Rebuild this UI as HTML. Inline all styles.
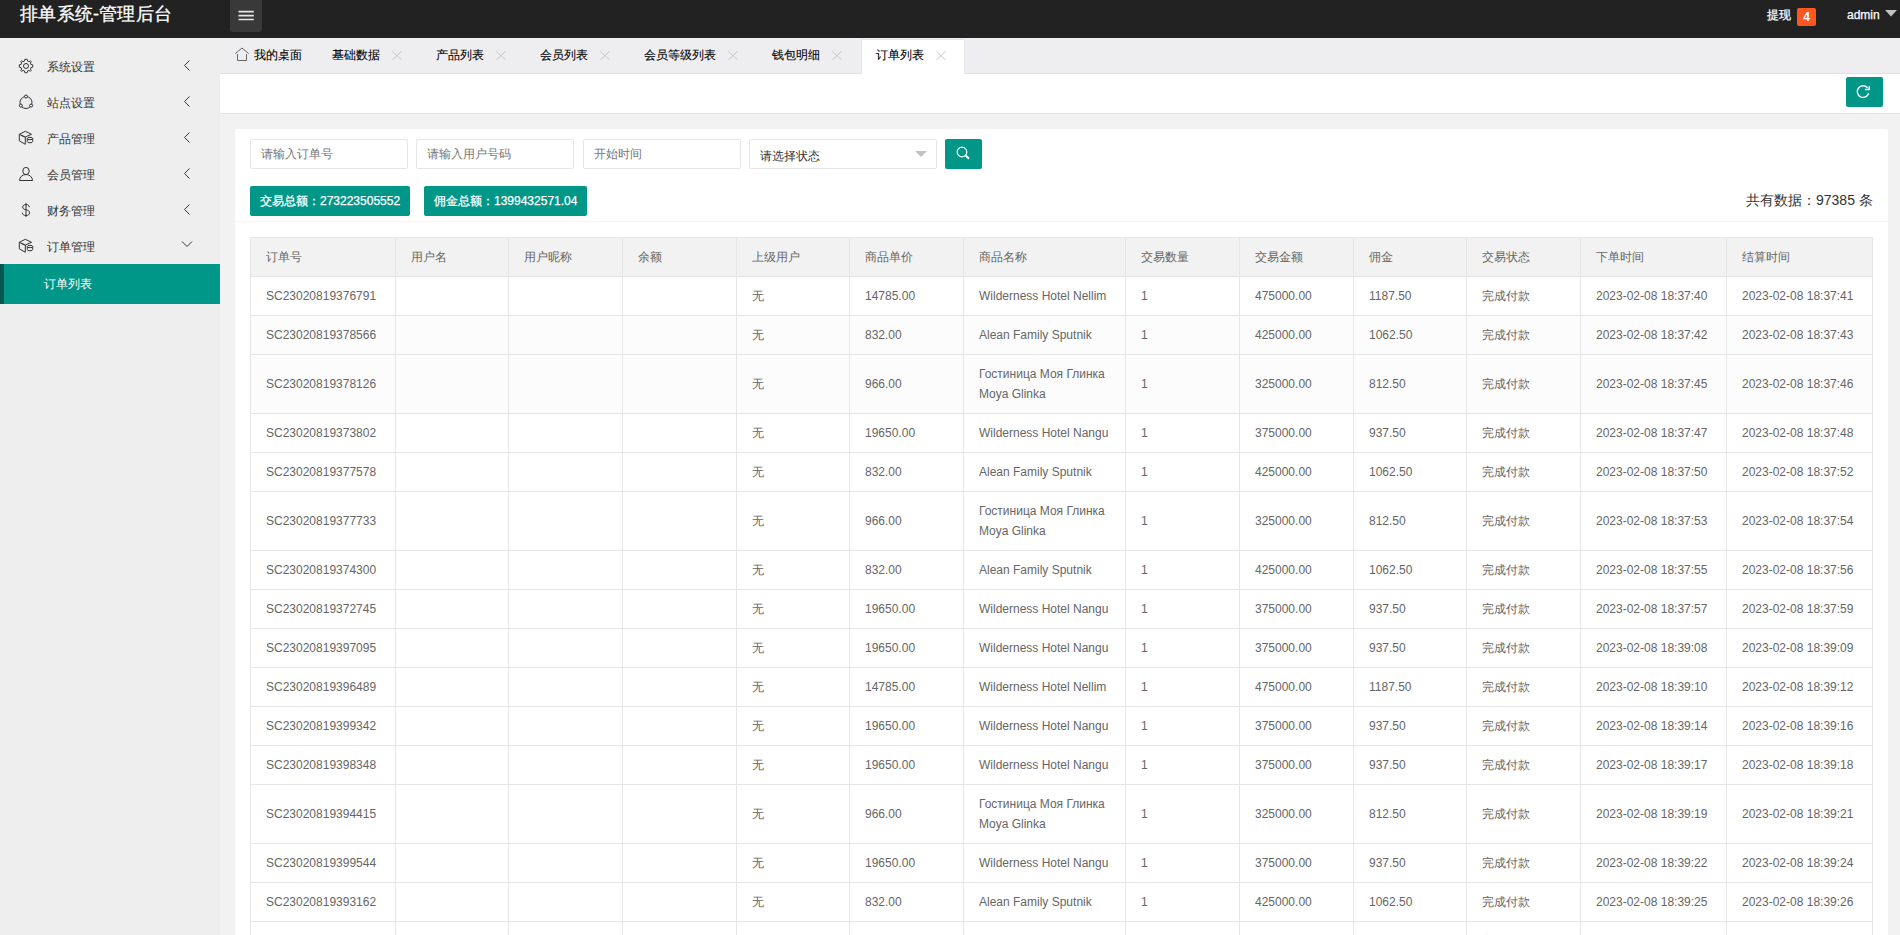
<!DOCTYPE html>
<html><head><meta charset="utf-8"><title>订单列表</title><style>
*{margin:0;padding:0;box-sizing:border-box}
html,body{width:1900px;height:935px;overflow:hidden;background:#f2f2f2;font-family:"Liberation Sans",sans-serif;font-size:12px;color:#333}
#hdr{position:absolute;left:0;top:0;width:1900px;height:38px;background:#222}
#logo{position:absolute;left:20px;top:2px;font-size:18px;line-height:24px;color:#fff;white-space:nowrap;letter-spacing:0.25px;-webkit-text-stroke:0.3px #fff}
#ham{position:absolute;left:230px;top:-4px;width:32px;height:36px;background:#393939;border-radius:3px}
#ham i{position:absolute;left:8px;width:16px;height:2px;background:#fff}
#hr1{position:absolute;left:1767px;top:5px;line-height:20px;font-size:12px;color:#fff;white-space:nowrap;-webkit-text-stroke:0.25px #fff}
#badge{position:absolute;left:1797px;top:8px;width:19px;height:18px;background:#ff5722;border-radius:2px;color:#fff;font-size:12px;line-height:18px;text-align:center;font-weight:bold}
#admin{position:absolute;left:1847px;top:5px;line-height:20px;font-size:12px;color:#fff;-webkit-text-stroke:0.25px #fff}
#side{position:absolute;left:0;top:38px;width:220px;height:897px;background:#eee}
.mi{position:absolute;left:0;width:220px;height:36px}
.mi .t{position:absolute;left:47px;top:1px;line-height:36px;font-size:12px;color:#333;white-space:nowrap}
.ic{position:absolute;left:18px;top:10px;width:16px;height:16px;overflow:visible}
.ar{position:absolute;left:178px;top:10px;width:16px;height:16px;overflow:visible}
#act{position:absolute;left:0;top:264px;width:220px;height:40px;background:#009688}
#act b{position:absolute;left:0;top:0;width:4px;height:40px;background:#05564f}
#act span{position:absolute;left:44px;top:0;line-height:40px;color:#fff;font-size:12px;white-space:nowrap}
#tabs{position:absolute;left:220px;top:38px;width:1680px;height:36px;background:#eeeef1;border-bottom:1px solid #e2e2e2}
#acttab{position:absolute;left:861px;top:39px;width:104px;height:36px;background:#fff;border:1px solid #e8e8e8;border-bottom:none}
.tab{position:absolute;top:39px;height:33px;line-height:33px;font-size:12px;color:#000;white-space:nowrap;-webkit-text-stroke:0.1px #000}
.x{position:absolute;top:51px;width:10px;height:10px;overflow:visible}
#bar{position:absolute;left:220px;top:74px;width:1680px;height:40px;background:#fff;border-bottom:1px solid #e2e2e2}
#refresh{position:absolute;left:1846px;top:77px;width:37px;height:30px;background:#009688;border-radius:2px}
#card{position:absolute;left:235px;top:129px;width:1653px;height:820px;background:#fff;border-radius:2px}
.inp{position:absolute;top:139px;height:30px;border:1px solid #e6e6e6;border-radius:2px;background:#fff;line-height:28px;padding-left:10px;color:#757575;font-size:12px;white-space:nowrap}
.btn{position:absolute;background:#009688;color:#fff;border-radius:2px;font-size:12px;white-space:nowrap;-webkit-text-stroke:0.25px #fff}
#divl{position:absolute;left:235px;top:221px;width:1653px;height:1px;background:#f6f6f6}
#total{position:absolute;left:1746px;top:190px;font-size:14px;line-height:20px;color:#333;white-space:nowrap}
table{position:absolute;left:250px;top:237px;border-collapse:collapse;table-layout:fixed}
td,th{border:1px solid #e6e6e6;padding:0 0 0 15px;font-size:12px;line-height:20px;color:#666;font-weight:normal;text-align:left;white-space:nowrap;overflow:hidden;vertical-align:middle}
th{background:#f2f2f2;height:39px}
td{height:39px}
tr.tall td{height:59px}
tr.g td{background:#fcfcfc}
</style></head><body>
<div id="hdr"><div id="logo">排单系统-管理后台</div><div id="ham"><svg style="position:absolute;left:0;top:4px" width="32" height="32" viewBox="0 0 32 32"><path d="M8.5 11.6 H23.8 M8.5 15.6 H23.8 M8.5 19.5 H23.8" stroke="#e6e6e6" stroke-width="1.6"/></svg></div><div id="hr1">提现</div><div id="badge">4</div><div id="admin">admin</div><svg style="position:absolute;left:1885px;top:10px" width="12" height="7" viewBox="0 0 12 7"><path d="M0 0 H12 L6 6.5 Z" fill="#c2c2c2"/></svg></div>
<div id="side">
<div class="mi" style="top:10px"><span class="t">系统设置</span><svg class="ic" style="" width="16" height="16" viewBox="0 0 16 16"><g fill="none" stroke="#333" stroke-width="1"><path d="M8 1.2 L9.2 1.4 L9.6 3.1 L10.9 3.7 L12.4 2.8 L13.3 3.6 L12.4 5.1 L12.9 6.4 L14.7 6.8 L14.8 8 L14.7 9.2 L12.9 9.6 L12.4 10.9 L13.3 12.4 L12.4 13.3 L10.9 12.4 L9.6 12.9 L9.2 14.7 L8 14.8 L6.8 14.7 L6.4 12.9 L5.1 12.4 L3.6 13.3 L2.8 12.4 L3.7 10.9 L3.1 9.6 L1.3 9.2 L1.2 8 L1.3 6.8 L3.1 6.4 L3.7 5.1 L2.8 3.6 L3.6 2.8 L5.1 3.7 L6.4 3.1 L6.8 1.4 Z"/><circle cx="8" cy="8" r="2.5"/></g></svg><svg class="ar" style="" width="16" height="16" viewBox="0 0 16 16"><path d="M11.5 2.5 L6.5 7.5 L11.5 12.5" fill="none" stroke="#333" stroke-width="1"/></svg></div>
<div class="mi" style="top:46px"><span class="t">站点设置</span><svg class="ic" style="" width="16" height="16" viewBox="0 0 16 16"><g fill="none" stroke="#333" stroke-width="1"><circle cx="8" cy="8.5" r="6"/><g fill="#eee"><circle cx="8" cy="2.5" r="1.5"/><circle cx="2.86" cy="11.6" r="1.5"/><circle cx="13.14" cy="11.6" r="1.5"/></g></g></svg><svg class="ar" style="" width="16" height="16" viewBox="0 0 16 16"><path d="M11.5 2.5 L6.5 7.5 L11.5 12.5" fill="none" stroke="#333" stroke-width="1"/></svg></div>
<div class="mi" style="top:82px"><span class="t">产品管理</span><svg class="ic" style="" width="16" height="16" viewBox="0 0 16 16"><g fill="none" stroke="#333" stroke-width="1"><path d="M1.3 4.3 L7.3 1.3 L13.5 4.3 L7.3 7 Z"/><path d="M1.3 4.3 V10.8 L7.3 14.3 V7"/><path d="M2.9 5.3 L6.6 6.9"/><ellipse cx="12" cy="8.5" rx="2.7" ry="1.2"/><path d="M9.3 8.5 V11.6 A2.7 1.2 0 0 0 14.7 11.6 V8.5"/></g></svg><svg class="ar" style="" width="16" height="16" viewBox="0 0 16 16"><path d="M11.5 2.5 L6.5 7.5 L11.5 12.5" fill="none" stroke="#333" stroke-width="1"/></svg></div>
<div class="mi" style="top:118px"><span class="t">会员管理</span><svg class="ic" style="" width="16" height="16" viewBox="0 0 16 16"><g fill="none" stroke="#333" stroke-width="1"><ellipse cx="8" cy="5" rx="3.2" ry="3.6"/><path d="M1.5 14.5 A6.5 6 0 0 1 14.5 14.5 Z"/></g></svg><svg class="ar" style="" width="16" height="16" viewBox="0 0 16 16"><path d="M11.5 2.5 L6.5 7.5 L11.5 12.5" fill="none" stroke="#333" stroke-width="1"/></svg></div>
<div class="mi" style="top:154px"><span class="t">财务管理</span><svg class="ic" style="" width="16" height="16" viewBox="0 0 16 16"><g fill="none" stroke="#333" stroke-width="1"><path d="M11.3 5.2 C11.3 3.5 10 2.6 8 2.6 C6 2.6 4.7 3.5 4.7 5 C4.7 6.6 6 7.3 8 7.8 C10.3 8.3 11.6 9.1 11.6 10.8 C11.6 12.5 10.2 13.5 8 13.5 C5.7 13.5 4.3 12.4 4.3 10.6"/><path d="M8 1 V15"/></g></svg><svg class="ar" style="" width="16" height="16" viewBox="0 0 16 16"><path d="M11.5 2.5 L6.5 7.5 L11.5 12.5" fill="none" stroke="#333" stroke-width="1"/></svg></div>
<div class="mi" style="top:190px"><span class="t">订单管理</span><svg class="ic" style="" width="16" height="16" viewBox="0 0 16 16"><g fill="none" stroke="#333" stroke-width="1"><path d="M1.3 4.3 L7.3 1.3 L13.5 4.3 L7.3 7 Z"/><path d="M1.3 4.3 V10.8 L7.3 14.3 V7"/><path d="M2.9 5.3 L6.6 6.9"/><ellipse cx="12" cy="8.5" rx="2.7" ry="1.2"/><path d="M9.3 8.5 V11.6 A2.7 1.2 0 0 0 14.7 11.6 V8.5"/></g></svg><svg class="ar" style="" width="16" height="16" viewBox="0 0 16 16"><path d="M4 3.5 L9 8.5 L14 3.5" fill="none" stroke="#333" stroke-width="1"/></svg></div>
</div>
<div id="act"><b></b><span>订单列表</span></div>
<div id="tabs"></div><div id="acttab"></div><div id="bar"></div>
<svg style="position:absolute;left:230px;top:42px" width="24" height="24" viewBox="0 0 24 24"><path d="M5.3 11.6 L12 6 L18.7 11.6" fill="none" stroke="#666" stroke-width="1"/><path d="M7.5 12 V18.5 H16.5 V12" fill="none" stroke="#666" stroke-width="1"/></svg>
<div class="tab" style="left:254px">我的桌面</div>
<div class="tab" style="left:332px">基础数据</div>
<svg class="x" style="left:392px" viewBox="0 0 10 10"><path d="M0.5 0.3 L9.5 8.9 M9.5 0.3 L0.5 8.9" stroke="#c6c6c6" stroke-width="1"/></svg>
<div class="tab" style="left:436px">产品列表</div>
<svg class="x" style="left:496px" viewBox="0 0 10 10"><path d="M0.5 0.3 L9.5 8.9 M9.5 0.3 L0.5 8.9" stroke="#c6c6c6" stroke-width="1"/></svg>
<div class="tab" style="left:540px">会员列表</div>
<svg class="x" style="left:600px" viewBox="0 0 10 10"><path d="M0.5 0.3 L9.5 8.9 M9.5 0.3 L0.5 8.9" stroke="#c6c6c6" stroke-width="1"/></svg>
<div class="tab" style="left:644px">会员等级列表</div>
<svg class="x" style="left:728px" viewBox="0 0 10 10"><path d="M0.5 0.3 L9.5 8.9 M9.5 0.3 L0.5 8.9" stroke="#c6c6c6" stroke-width="1"/></svg>
<div class="tab" style="left:772px">钱包明细</div>
<svg class="x" style="left:832px" viewBox="0 0 10 10"><path d="M0.5 0.3 L9.5 8.9 M9.5 0.3 L0.5 8.9" stroke="#c6c6c6" stroke-width="1"/></svg>
<div class="tab" style="left:876px">订单列表</div>
<svg class="x" style="left:936px" viewBox="0 0 10 10"><path d="M0.5 0.3 L9.5 8.9 M9.5 0.3 L0.5 8.9" stroke="#c6c6c6" stroke-width="1"/></svg>
<div id="refresh"><svg style="position:absolute;left:0;top:0" width="37" height="30" viewBox="0 0 37 30"><path d="M21.5 10.8 A5.8 5.8 0 1 0 22.7 16" fill="none" stroke="#fff" stroke-width="1.4"/><path d="M18.9 12.5 H23.2 V9.2" fill="none" stroke="#fff" stroke-width="1.4"/></svg></div>
<div id="card"></div>
<div class="inp" style="left:250px;width:158px">请输入订单号</div>
<div class="inp" style="left:416px;width:158px">请输入用户号码</div>
<div class="inp" style="left:583px;width:158px">开始时间</div>
<div class="inp" style="left:749px;width:188px;color:#333;padding-top:2px">请选择状态<svg style="position:absolute;left:165px;top:11px" width="12" height="7" viewBox="0 0 12 7"><path d="M0 0 H12 L6 6 Z" fill="#c2c2c2"/></svg></div>
<div class="btn" style="left:945px;top:139px;width:37px;height:30px"><svg style="position:absolute;left:11px;top:7px" width="15" height="15" viewBox="0 0 15 15"><circle cx="6" cy="6" r="4.8" fill="none" stroke="#fff" stroke-width="1.2"/><path d="M9.6 9.6 L13 12.8" stroke="#fff" stroke-width="2"/></svg></div>
<div class="btn" style="left:250px;top:186px;width:160px;height:30px;line-height:30px;padding-left:10px">交易总额：273223505552</div>
<div class="btn" style="left:424px;top:186px;width:163px;height:30px;line-height:30px;padding-left:10px">佣金总额：1399432571.04</div>
<div id="total">共有数据：97385 条</div>
<div id="divl"></div>
<table style="width:1623px"><colgroup><col style="width:145px"><col style="width:113px"><col style="width:114px"><col style="width:114px"><col style="width:113px"><col style="width:114px"><col style="width:162px"><col style="width:114px"><col style="width:114px"><col style="width:113px"><col style="width:114px"><col style="width:146px"><col style="width:146px"></colgroup>
<tr><th>订单号</th><th>用户名</th><th>用户昵称</th><th>余额</th><th>上级用户</th><th>商品单价</th><th>商品名称</th><th>交易数量</th><th>交易金额</th><th>佣金</th><th>交易状态</th><th>下单时间</th><th>结算时间</th></tr>
<tr><td>SC23020819376791</td><td></td><td></td><td></td><td>无</td><td>14785.00</td><td>Wilderness Hotel Nellim</td><td>1</td><td>475000.00</td><td>1187.50</td><td>完成付款</td><td>2023-02-08 18:37:40</td><td>2023-02-08 18:37:41</td></tr>
<tr class="g"><td>SC23020819378566</td><td></td><td></td><td></td><td>无</td><td>832.00</td><td>Alean Family Sputnik</td><td>1</td><td>425000.00</td><td>1062.50</td><td>完成付款</td><td>2023-02-08 18:37:42</td><td>2023-02-08 18:37:43</td></tr>
<tr class="tall g"><td>SC23020819378126</td><td></td><td></td><td></td><td>无</td><td>966.00</td><td>Гостиница Моя Глинка<br>Moya Glinka</td><td>1</td><td>325000.00</td><td>812.50</td><td>完成付款</td><td>2023-02-08 18:37:45</td><td>2023-02-08 18:37:46</td></tr>
<tr><td>SC23020819373802</td><td></td><td></td><td></td><td>无</td><td>19650.00</td><td>Wilderness Hotel Nangu</td><td>1</td><td>375000.00</td><td>937.50</td><td>完成付款</td><td>2023-02-08 18:37:47</td><td>2023-02-08 18:37:48</td></tr>
<tr><td>SC23020819377578</td><td></td><td></td><td></td><td>无</td><td>832.00</td><td>Alean Family Sputnik</td><td>1</td><td>425000.00</td><td>1062.50</td><td>完成付款</td><td>2023-02-08 18:37:50</td><td>2023-02-08 18:37:52</td></tr>
<tr class="tall"><td>SC23020819377733</td><td></td><td></td><td></td><td>无</td><td>966.00</td><td>Гостиница Моя Глинка<br>Moya Glinka</td><td>1</td><td>325000.00</td><td>812.50</td><td>完成付款</td><td>2023-02-08 18:37:53</td><td>2023-02-08 18:37:54</td></tr>
<tr><td>SC23020819374300</td><td></td><td></td><td></td><td>无</td><td>832.00</td><td>Alean Family Sputnik</td><td>1</td><td>425000.00</td><td>1062.50</td><td>完成付款</td><td>2023-02-08 18:37:55</td><td>2023-02-08 18:37:56</td></tr>
<tr><td>SC23020819372745</td><td></td><td></td><td></td><td>无</td><td>19650.00</td><td>Wilderness Hotel Nangu</td><td>1</td><td>375000.00</td><td>937.50</td><td>完成付款</td><td>2023-02-08 18:37:57</td><td>2023-02-08 18:37:59</td></tr>
<tr><td>SC23020819397095</td><td></td><td></td><td></td><td>无</td><td>19650.00</td><td>Wilderness Hotel Nangu</td><td>1</td><td>375000.00</td><td>937.50</td><td>完成付款</td><td>2023-02-08 18:39:08</td><td>2023-02-08 18:39:09</td></tr>
<tr><td>SC23020819396489</td><td></td><td></td><td></td><td>无</td><td>14785.00</td><td>Wilderness Hotel Nellim</td><td>1</td><td>475000.00</td><td>1187.50</td><td>完成付款</td><td>2023-02-08 18:39:10</td><td>2023-02-08 18:39:12</td></tr>
<tr><td>SC23020819399342</td><td></td><td></td><td></td><td>无</td><td>19650.00</td><td>Wilderness Hotel Nangu</td><td>1</td><td>375000.00</td><td>937.50</td><td>完成付款</td><td>2023-02-08 18:39:14</td><td>2023-02-08 18:39:16</td></tr>
<tr><td>SC23020819398348</td><td></td><td></td><td></td><td>无</td><td>19650.00</td><td>Wilderness Hotel Nangu</td><td>1</td><td>375000.00</td><td>937.50</td><td>完成付款</td><td>2023-02-08 18:39:17</td><td>2023-02-08 18:39:18</td></tr>
<tr class="tall"><td>SC23020819394415</td><td></td><td></td><td></td><td>无</td><td>966.00</td><td>Гостиница Моя Глинка<br>Moya Glinka</td><td>1</td><td>325000.00</td><td>812.50</td><td>完成付款</td><td>2023-02-08 18:39:19</td><td>2023-02-08 18:39:21</td></tr>
<tr><td>SC23020819399544</td><td></td><td></td><td></td><td>无</td><td>19650.00</td><td>Wilderness Hotel Nangu</td><td>1</td><td>375000.00</td><td>937.50</td><td>完成付款</td><td>2023-02-08 18:39:22</td><td>2023-02-08 18:39:24</td></tr>
<tr><td>SC23020819393162</td><td></td><td></td><td></td><td>无</td><td>832.00</td><td>Alean Family Sputnik</td><td>1</td><td>425000.00</td><td>1062.50</td><td>完成付款</td><td>2023-02-08 18:39:25</td><td>2023-02-08 18:39:26</td></tr>
<tr><td>SC23020819391234</td><td></td><td></td><td></td><td>无</td><td>832.00</td><td>Alean Family Sputnik</td><td>1</td><td>425000.00</td><td>1062.50</td><td>完成付款</td><td>2023-02-08 18:39:27</td><td>2023-02-08 18:39:28</td></tr>
</table>
</body></html>
